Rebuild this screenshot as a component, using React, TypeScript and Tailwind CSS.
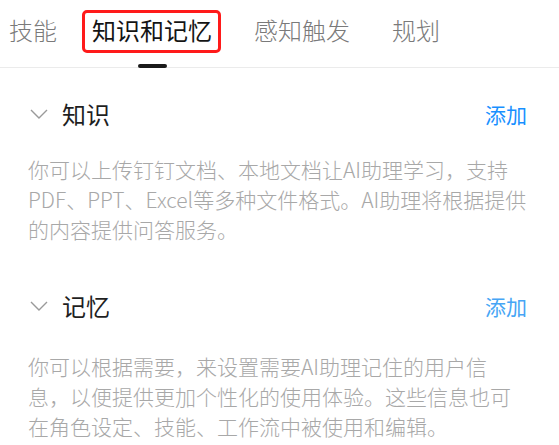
import React from 'react'

// Types
interface SectionProps {
  title: string
  lines: string[]
  linkColor: string
  descTop: string
}

const tabs = [
  { name: '技能', ml: 'ml-[9px]' },
  { name: '知识和记忆', ml: 'ml-[35px]', active: true },
  { name: '感知触发', ml: 'ml-[42px]' },
  { name: '规划', ml: 'ml-[42px]' },
]

const sections: SectionProps[] = [
  {
    title: '知识',
    linkColor: 'text-[#1890ff]',
    descTop: 'mt-[22px]',
    lines: [
      '你可以上传钉钉文档、本地文档让AI助理学习，支持',
      'PDF、PPT、Excel等多种文件格式。AI助理将根据提供',
      '的内容提供问答服务。',
    ],
  },
  {
    title: '记忆',
    linkColor: 'text-[#46a5f5]',
    descTop: 'mt-[27px]',
    lines: [
      '你可以根据需要，来设置需要AI助理记住的用户信',
      '息，以便提供更加个性化的使用体验。这些信息也可',
      '在角色设定、技能、工作流中被使用和编辑。',
    ],
  },
]

const Chevron: React.FC = () => (
  <svg width="18" height="10" viewBox="0 0 18 10" fill="none">
    <polyline points="1,1 9,9 17,1" stroke="#9a9a9a" strokeWidth="1.4" />
  </svg>
)

const Section: React.FC<SectionProps> = ({ title, lines, linkColor, descTop }) => (
  <div className="flex flex-col">
    {/* Header */}
    <div className="h-[36px] flex items-center justify-between pl-[30px] pr-[32px]">
      <div className="flex items-center gap-[14px]">
        <Chevron />
        <span className="text-[24px] leading-[36px] text-[#1f1f1f]">{title}</span>
      </div>
      <span className={`text-[21px] leading-[36px] ${linkColor}`}>添加</span>
    </div>

    {/* Description */}
    <p className={`${descTop} pl-[28px] text-[21px] leading-[30px] font-light text-[#a8a8a8] whitespace-nowrap`}>
      {lines.map((line, i) => (
        <React.Fragment key={i}>
          {line}
          {i < lines.length - 1 && <br />}
        </React.Fragment>
      ))}
    </p>
  </div>
)

const App: React.FC = () => {
  return (
    <div
      className="w-[559px] h-[445px] bg-white overflow-hidden"
      style={{ fontFamily: '"Noto Sans CJK SC", "Noto Sans", sans-serif' }}
    >
      {/* Tabs */}
      <div className="relative h-[68px] flex items-start pt-[18px] border-b border-[#ebebeb]">
        {tabs.map((tab) => (
          <div key={tab.name} className={`relative ${tab.ml}`}>
            <span
              className={`block text-[24px] leading-[24px] ${
                tab.active ? 'text-[#141414]' : 'font-light text-[#7a7a7a]'
              }`}
            >
              {tab.name}
            </span>
            {tab.active && (
              <>
                <div className="absolute left-[-10px] top-[-8px] w-[139px] h-[43px] border-[3px] border-[#ff1a1a] rounded-[5px]" />
                <div className="absolute left-[46px] top-[46px] w-[29px] h-[4px] rounded-full bg-[#1a1a1a]" />
              </>
            )}
          </div>
        ))}
      </div>

      {/* Content */}
      <div className="pt-[28px] flex flex-col gap-[44px]">
        {sections.map((s) => (
          <Section key={s.title} {...s} />
        ))}
      </div>
    </div>
  )
}

export default App
